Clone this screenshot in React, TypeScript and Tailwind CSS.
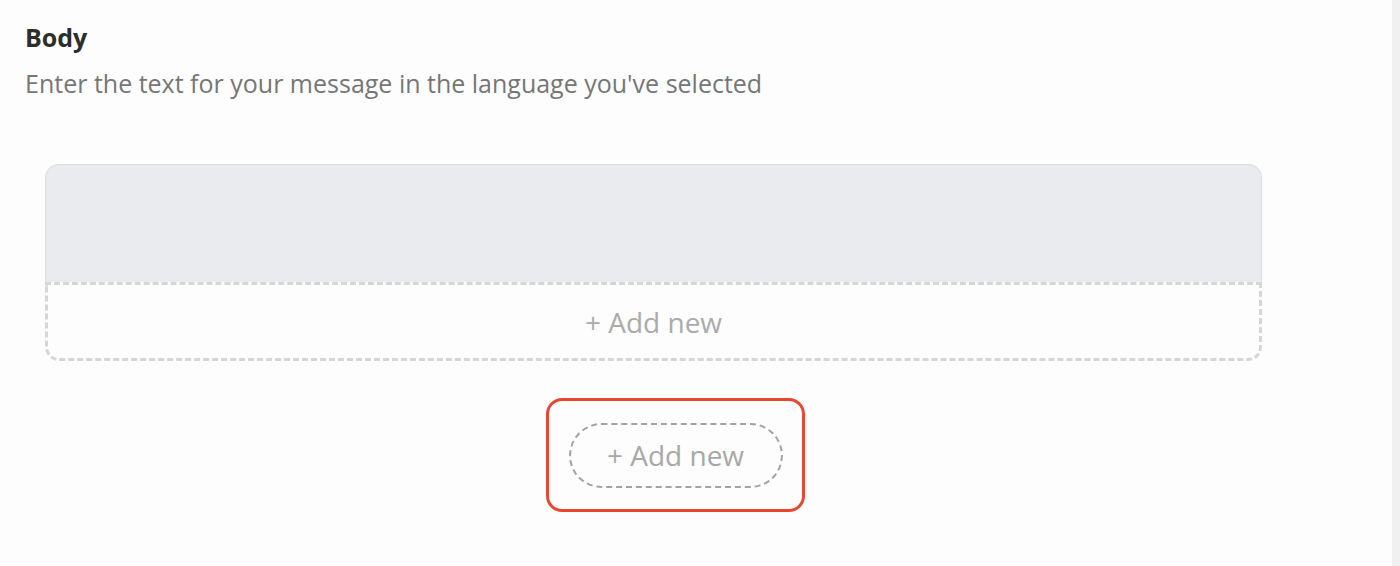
export default function App() {
  return (
    <div className="flex h-[566px] w-[1400px] bg-white font-['Open_Sans',sans-serif]">
      {/* Main content */}
      <div className="flex-1 bg-[#fdfdfd] pl-[25px] pr-[130px] pt-[21px]">
        <h2 className="text-[25px] font-bold leading-[32px] text-[#2d2d2d]">Body</h2>
        <p className="mt-[15px] text-[25px] leading-[30px] text-[#767676]">
          Enter the text for your message in the language you've selected
        </p>

        <div className="ml-[20px] mt-[66px] w-[1217px]">
          {/* Empty message area */}
          <div className="h-[118px] rounded-t-[14px] border border-b-0 border-[#dcdde0] bg-[#e9ebef]" />
          {/* Add new row */}
          <div className="flex h-[79px] items-center justify-center rounded-b-[14px] border-[3px] border-dashed border-[#d6d6d6] text-[28px] text-[#ababab]">
            + Add new
          </div>

          {/* Highlighted add button */}
          <div className="mt-[37px] flex">
            <div className="ml-[501px] flex h-[114px] w-[259px] items-center justify-center rounded-[16px] border-[3px] border-[#e8472e]">
              <button className="flex h-[65px] w-[214px] items-center justify-center rounded-full border-2 border-dashed border-[#a3a3a3] text-[28px] text-[#a8a8a8]">
                + Add new
              </button>
            </div>
          </div>
        </div>
      </div>
      {/* Scrollbar track */}
      <div className="w-[8px] bg-[#f0f0f0]" />
    </div>
  )
}
